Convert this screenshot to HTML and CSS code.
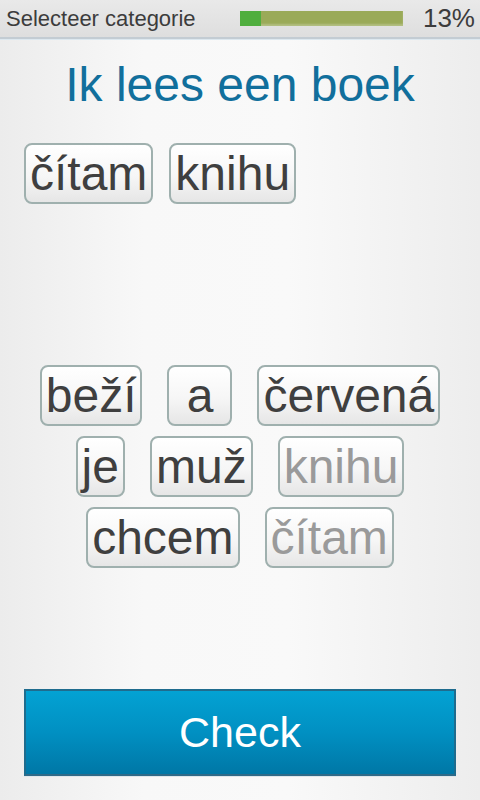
FILE: index.html
```html
<!DOCTYPE html>
<html lang="cs">
<head>
    <meta charset="UTF-8">
    <meta name="viewport" content="width=device-width, initial-scale=1.0">
    <title>Selecteer categorie</title>
    <link rel="stylesheet" href="styles.css">
</head>
<body>
    <div class="topbar">
        <span class="category">Selecteer categorie</span>
        <div class="progress">
            <div class="progress-fill" style="width: 13%"></div>
        </div>
        <span class="percent">13%</span>
    </div>

    <h1 class="sentence">Ik lees een boek</h1>

    <div class="answer">
        <span class="word">čítam</span>
        <span class="word">knihu</span>
    </div>

    <div class="bank">
        <span class="word">beží</span>
        <span class="word single">a</span>
        <span class="word">červená</span>
        <span class="word">je</span>
        <span class="word">muž</span>
        <span class="word used">knihu</span>
        <span class="word">chcem</span>
        <span class="word used">čítam</span>
    </div>

    <button class="check-btn">Check</button>
</body>
</html>
```

FILE: styles.css
```css
html, body {
    margin: 0;
    padding: 0;
}

body {
    font-family: "Liberation Sans", Arial, sans-serif;
    width: 480px;
    height: 800px;
    display: flex;
    flex-direction: column;
    background: linear-gradient(90deg, #ececec 0%, #f8f8f8 30%, #f9f9f9 60%, #ededed 100%);
    overflow: hidden;
}

.topbar {
    height: 37px;
    display: flex;
    align-items: center;
    padding: 0 5px 0 6px;
    background: linear-gradient(180deg, #e9e9e9, #dedede);
    border-bottom: 2px solid #c3ccd3;
    box-shadow: 0 1px 0 #dde8ef;
}

.category {
    font-size: 22px;
    color: #3c3c3c;
    width: 234px;
}

.progress {
    width: 163px;
    height: 15px;
    background: #9aaa58;
    box-shadow: inset 0 -2px 2px rgba(255, 255, 255, 0.25);
}

.progress-fill {
    height: 100%;
    background: #4fae3e;
}

.percent {
    font-size: 26px;
    color: #3c3c3c;
    margin-left: auto;
}

.sentence {
    margin: 18px 0 0;
    font-size: 48px;
    font-weight: normal;
    line-height: 55px;
    text-align: center;
    color: #116f9c;
}

.answer {
    height: 222px;
    margin-top: 31px;
    padding: 0 24px;
    display: flex;
    flex-wrap: wrap;
    align-content: flex-start;
    gap: 10px 16px;
}

.bank {
    padding: 0 24px;
    display: flex;
    flex-wrap: wrap;
    justify-content: center;
    gap: 10px 25px;
}

.word {
    display: inline-block;
    padding: 0 4px;
    font-size: 48px;
    line-height: 57px;
    text-align: center;
    color: #3f3f3f;
    background: linear-gradient(180deg, #ffffff 0%, #f6f6f6 55%, #e6e6e6 100%);
    border: 2px solid #9fb0ae;
    border-radius: 8px;
}

.word.single {
    min-width: 53px;
}

.word.used {
    color: #9a9a9a;
}

.check-btn {
    margin: auto 24px 24px;
    height: 87px;
    font-family: inherit;
    font-size: 43px;
    color: #ffffff;
    background: linear-gradient(180deg, #03a2d3 0%, #0190c2 50%, #0077a6 100%);
    border: 2px solid #1f6c8e;
    border-bottom-color: #2f6a88;
    border-radius: 0;
    box-shadow: 0 1px 0 #dfe6ea;
}
```
